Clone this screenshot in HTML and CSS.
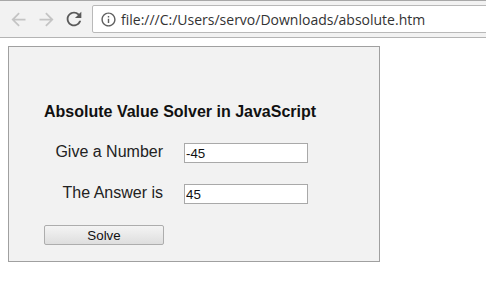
FILE: index.html
```html
<!DOCTYPE html>
<html lang="en">
<head>
  <meta charset="UTF-8">
  <meta name="viewport" content="width=device-width, initial-scale=1.0">
  <title>absolute.htm</title>
  <link rel="stylesheet" href="styles.css">
</head>
<body>
  <div class="toolbar">
    <span class="nav-btn disabled">
      <svg width="21" height="21" viewBox="0 0 24 24"><path d="M20 11H7.83l5.59-5.59L12 4l-8 8 8 8 1.41-1.41L7.83 13H20v-2z"/></svg>
    </span>
    <span class="nav-btn disabled">
      <svg width="21" height="21" viewBox="0 0 24 24"><path d="M4 11h12.17l-5.59-5.59L12 4l8 8-8 8-1.41-1.41L16.17 13H4v-2z"/></svg>
    </span>
    <span class="nav-btn">
      <svg width="22" height="22" viewBox="0 0 24 24"><path d="M17.65 6.35A7.958 7.958 0 0 0 12 4c-4.42 0-7.99 3.58-7.99 8s3.57 8 7.99 8c3.73 0 6.84-2.55 7.73-6h-2.08A5.99 5.99 0 0 1 12 18c-3.31 0-6-2.69-6-6s2.69-6 6-6c1.66 0 3.14.69 4.22 1.78L13 11h7V4l-2.35 2.35z"/></svg>
    </span>
    <div class="omnibox">
      <svg class="info" width="17" height="17" viewBox="0 0 24 24"><path d="M11 17h2v-6h-2v6zm1-15C6.48 2 2 6.48 2 12s4.48 10 10 10 10-4.48 10-10S17.52 2 12 2zm0 18c-4.41 0-8-3.59-8-8s3.59-8 8-8 8 3.59 8 8-3.59 8-8 8zM11 9h2V7h-2v2z"/></svg>
      <span class="url">file:///C:/Users/servo/Downloads/absolute.htm</span>
    </div>
  </div>

  <div class="page">
    <div class="panel">
      <h3 class="title">Absolute Value Solver in JavaScript</h3>
      <div class="row">
        <label for="number">Give a Number</label>
        <input type="text" id="number" value="-45">
      </div>
      <div class="row">
        <label for="answer">The Answer is</label>
        <input type="text" id="answer" value="45">
      </div>
      <button id="solveBtn">Solve</button>
    </div>
  </div>
</body>
</html>
```

FILE: styles.css
```css
body {
  margin: 0;
  background: #fff;
  font-family: "Liberation Sans", Arial, sans-serif;
}
.toolbar {
  display: flex;
  align-items: center;
  height: 36px;
  background-color: #f2f2f2;
  border-top: 1px solid #a8a8a8;
  border-bottom: 1px solid #b4b4b4;
  padding-left: 4px;
  overflow: hidden;
}
.nav-btn {
  display: flex;
  align-items: center;
  justify-content: center;
  width: 28px;
  height: 28px;
  fill: #5a5a5a;
}
.nav-btn.disabled {
  fill: #c4c4c4;
}
.omnibox {
  flex: 1;
  display: flex;
  align-items: center;
  gap: 4px;
  height: 28px;
  box-sizing: border-box;
  margin-left: 4px;
  margin-right: -6px;
  padding-left: 7px;
  background: #fff;
  border: 1px solid #b9b9b9;
  border-radius: 2px;
}
.info {
  fill: #5f5f5f;
}
.url {
  font-family: "Open Sans", "Noto Sans", sans-serif;
  font-size: 14px;
  color: #333;
  white-space: nowrap;
}
.page {
  padding: 8px;
}
.panel {
  display: flex;
  flex-direction: column;
  align-items: flex-start;
  gap: 21px;
  width: 372px;
  height: 216px;
  box-sizing: border-box;
  padding: 55px 0 0 35px;
  background-color: #f2f2f2;
  border: 1px solid #a0a0a0;
}
.title {
  margin: 0;
  font-size: 16px;
  line-height: 20px;
  font-weight: bold;
  color: #111;
}
.row {
  display: flex;
  align-items: flex-start;
  gap: 21px;
}
.row label {
  width: 119px;
  text-align: right;
  font-size: 16px;
  line-height: 17px;
  color: #222;
}
.row input {
  width: 124px;
  height: 20px;
  box-sizing: border-box;
  margin: 0;
  padding: 1px;
  border: 1px solid #a9a9a9;
  background: #fff;
  font-family: "Liberation Sans", Arial, sans-serif;
  font-size: 13.33px;
  color: #111;
}
button {
  width: 120px;
  height: 20px;
  margin: 0;
  padding: 0;
  border: 1px solid #adadad;
  border-radius: 2px;
  background: linear-gradient(#f4f4f4, #dedede);
  font-family: "Liberation Sans", Arial, sans-serif;
  font-size: 13.33px;
  color: #111;
}
```
